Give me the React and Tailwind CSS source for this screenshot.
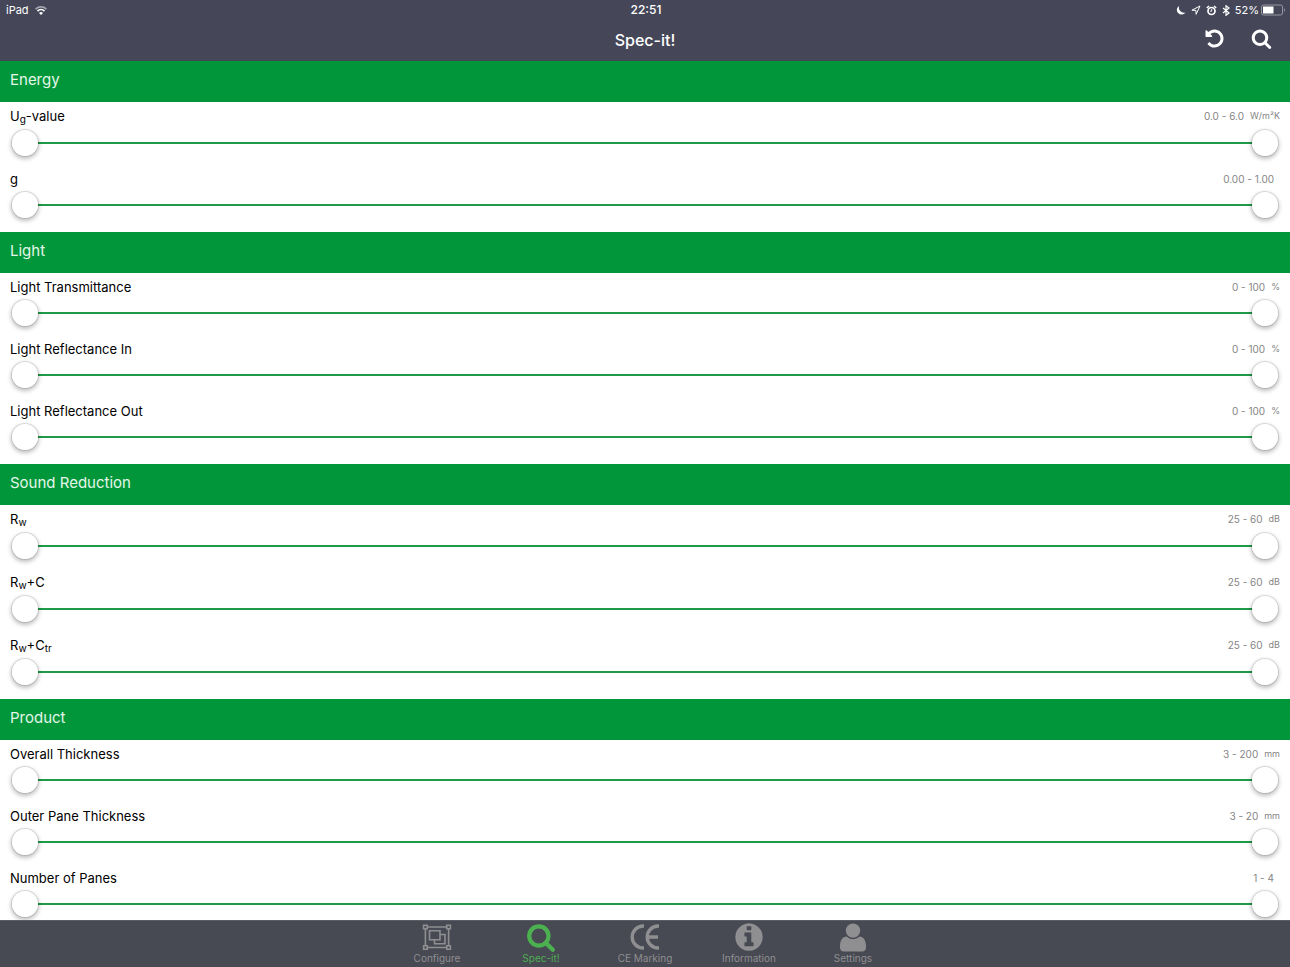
import { useState } from "react";

const PATHS = {
  search:
    "M1216 832q0-185-131.5-316.5t-316.5-131.5-316.5 131.5-131.5 316.5 131.5 316.5 316.5 131.5 316.5-131.5 131.5-316.5zm512 832q0 52-38 90t-90 38q-54 0-90-38l-343-342q-179 124-399 124-143 0-273.5-55.5t-225-150-150-225-55.5-273.5 55.5-273.5 150-225 225-150 273.5-55.5 273.5 55.5 225 150 150 225 55.5 273.5q0 220-124 399l343 343q37 37 37 90z",
  undo: "M1664 896q0 156-61 298t-164 245-245 164-298 61q-172 0-327-72.5t-264-204.5q-7-10-6.5-22.5t8.5-20.5l137-138q10-9 25-9 16 2 23 12 73 95 179 147t225 52q104 0 198.5-40.5t163.5-109.5 109.5-163.5 40.5-198.5-40.5-198.5-109.5-163.5-163.5-109.5-198.5-40.5q-98 0-188 35.5t-160 101.5l137 138q31 30 14 69-17 40-59 40h-448q-26 0-45-19t-19-45v-448q0-42 40-59 39-17 69 14l130 129q107-101 244.5-156.5t284.5-55.5q156 0 298 61t245 164 164 245 61 298z",
  info: "M1152 1376v-160q0-14-9-23t-23-9h-96v-512q0-14-9-23t-23-9h-320q-14 0-23 9t-9 23v160q0 14 9 23t23 9h96v320h-96q-14 0-23 9t-9 23v160q0 14 9 23t23 9h448q14 0 23-9t9-23zm-128-896v-160q0-14-9-23t-23-9h-192q-14 0-23 9t-9 23v160q0 14 9 23t23 9h192q14 0 23-9t9-23zm640 416q0 209-103 385.5t-279.5 279.5-385.5 103-385.5-103-279.5-279.5-103-385.5 103-385.5 279.5-279.5 385.5-103 385.5 103 279.5 279.5 103 385.5z",
};

function Glyph({ name, className }) {
  return (
    <svg viewBox="0 0 1792 1792" fill="currentColor" className={className} aria-hidden="true">
      <path d={PATHS[name]} />
    </svg>
  );
}

function ConfigureIcon() {
  return (
    <svg viewBox="0 0 30 30" className="size-[30px]" fill="none" stroke="currentColor" strokeWidth="1.6" aria-hidden="true">
      <path d="M5.200 5h19.600M5.200 25.500h19.600M3.400 6.800v16.900M26.600 6.800v16.900" />
      <path d="M1.600 3.200h3.600v3.600H1.600zM24.800 3.200h3.600v3.600h-3.600zM1.600 23.700h3.600v3.600H1.600zM24.800 23.700h3.600v3.600h-3.600z" />
      <path d="M7.500 8.700h10.500v9H7.500zM18 12.500h5v9.200H12.500v-4" />
    </svg>
  );
}

function CeIcon() {
  return (
    <svg viewBox="0 0 30 30" className="size-[30px]" fill="none" stroke="currentColor" strokeWidth="3.4" aria-hidden="true">
      <path d="M14 4h-.8a11 11 0 0 0 0 22h.8M29 4h-.8a11 11 0 0 0 0 22h.8M17.500 15H28" />
    </svg>
  );
}

function PersonIcon() {
  return (
    <svg viewBox="0 0 30 30" className="size-[30px]" fill="currentColor" aria-hidden="true">
      <circle cx="15" cy="8.600" r="7.200" />
      <path d="M8.500 14.600C4.600 14.600 2 18.800 2 23.800v2C2 28 3.600 29.600 5.800 29.600h18.400c2.200 0 3.800-1.600 3.800-3.800v-2c0-5-2.600-9.200-6.500-9.200A9.400 9.400 0 0 1 8.500 14.600z" />
    </svg>
  );
}

function Sub({ children }) {
  return <sub className="-bottom-0.5 text-[10px]">{children}</sub>;
}

const SECTIONS = [
  {
    title: "Energy",
    rows: [
      { id: "ug", label: <>U<Sub>g</Sub>-value</>, name: "Ug-value", min: 0, max: 6, digits: 1, unit: "W/m²K", sub: true },
      { id: "g", label: "g", name: "g", min: 0, max: 1, digits: 2, unit: "" },
    ],
  },
  {
    title: "Light",
    rows: [
      { id: "lt", label: "Light Transmittance", name: "Light Transmittance", min: 0, max: 100, digits: 0, unit: "%" },
      { id: "lri", label: "Light Reflectance In", name: "Light Reflectance In", min: 0, max: 100, digits: 0, unit: "%" },
      { id: "lro", label: "Light Reflectance Out", name: "Light Reflectance Out", min: 0, max: 100, digits: 0, unit: "%" },
    ],
  },
  {
    title: "Sound Reduction",
    rows: [
      { id: "rw", label: <>R<Sub>w</Sub></>, name: "Rw", min: 25, max: 60, digits: 0, unit: "dB", sub: true },
      { id: "rwc", label: <>R<Sub>w</Sub>+C</>, name: "Rw+C", min: 25, max: 60, digits: 0, unit: "dB", sub: true },
      { id: "rwctr", label: <>R<Sub>w</Sub>+C<Sub>tr</Sub></>, name: "Rw+Ctr", min: 25, max: 60, digits: 0, unit: "dB", sub: true },
    ],
  },
  {
    title: "Product",
    rows: [
      { id: "thick", label: "Overall Thickness", name: "Overall Thickness", min: 3, max: 200, digits: 0, unit: "mm" },
      { id: "outer", label: "Outer Pane Thickness", name: "Outer Pane Thickness", min: 3, max: 20, digits: 0, unit: "mm" },
      { id: "panes", label: "Number of Panes", name: "Number of Panes", min: 1, max: 4, digits: 0, unit: "" },
    ],
  },
];

const RANGE =
  "pointer-events-none absolute inset-0 m-0 h-7 w-full appearance-none bg-transparent outline-none [&::-webkit-slider-thumb]:pointer-events-auto [&::-webkit-slider-thumb]:size-7 [&::-webkit-slider-thumb]:appearance-none [&::-webkit-slider-thumb]:rounded-full [&::-webkit-slider-thumb]:border [&::-webkit-slider-thumb]:border-black/10 [&::-webkit-slider-thumb]:bg-white [&::-webkit-slider-thumb]:bg-clip-padding [&::-webkit-slider-thumb]:shadow-[0_2px_4px_rgba(0,0,0,0.25)]";

function RangeRow({ row }) {
  const [low, setLow] = useState(row.min);
  const [high, setHigh] = useState(row.max);
  const step = row.digits ? 1 / 10 ** row.digits : 1;
  const span = row.max - row.min;
  const start = ((low - row.min) / span) * 100;
  const end = ((row.max - high) / span) * 100;
  return (
    <div className={row.sub ? "h-[63px] pt-1" : "h-[62px] pt-1"}>
      <div className={row.sub ? "flex h-[23px] justify-between px-[10px]" : "flex h-[22px] justify-between px-[10px]"}>
        <label htmlFor={row.id + "-low"} className="text-[13px] leading-5 text-black">
          {row.label}
        </label>
        <output className="flex gap-[6px] text-[10px] leading-5 text-[#858585]">
          <span>
            {low.toFixed(row.digits)} - {high.toFixed(row.digits)}
          </span>
          <span className="text-[9px] leading-5">{row.unit}</span>
        </output>
      </div>
      <div className="relative mx-[11px] h-7">
        <div className="flex h-7 items-center px-3">
          <div className="h-[2px] flex-1 bg-[#1f9a48]" style={{ marginLeft: start + "%", marginRight: end + "%" }} />
        </div>
        <input id={row.id + "-low"} type="range" min={row.min} max={row.max} step={step} value={low} onChange={(e) => setLow(Math.min(Number(e.target.value), high))} className={RANGE} />
        <input type="range" aria-label={row.name + " maximum"} min={row.min} max={row.max} step={step} value={high} onChange={(e) => setHigh(Math.max(Number(e.target.value), low))} className={RANGE} />
      </div>
    </div>
  );
}

function StatusBar() {
  return (
    <div className="grid h-5 grid-cols-3 items-center pl-[6px] pr-1 text-[11px] leading-5">
      <div className="flex items-center gap-[6px]">
        <span>iPad</span>
        <svg viewBox="0 0 12 9" className="h-[9px] w-3" fill="none" stroke="currentColor" strokeWidth="1.7" aria-hidden="true">
          <path d="M.6 3.100a7.700 7.700 0 0 1 10.800 0" opacity=".5" />
          <path d="M2.500 5.100a5 5 0 0 1 7 0" />
          <path d="M6 9 4 6.900a2.900 2.900 0 0 1 4 0z" fill="currentColor" stroke="none" />
        </svg>
      </div>
      <time className="text-center text-xs font-medium leading-5">22:51</time>
      <div className="flex items-center justify-end gap-[5px]">
        <svg viewBox="0 0 10 10" className="size-[10px]" fill="currentColor" aria-hidden="true">
          <path d="M3.300.7A4.700 4.700 0 1 0 9.500 7.400 5 5 0 0 1 3.300.7z" />
        </svg>
        <svg viewBox="0 0 10 10" className="size-[10px]" fill="none" stroke="currentColor" strokeWidth="1" strokeLinejoin="round" aria-hidden="true">
          <path d="M9 1 .9 5.200l4 .2.200 3.900z" />
        </svg>
        <svg viewBox="0 0 11 11" className="size-[11px]" fill="none" stroke="currentColor" aria-hidden="true">
          <circle cx="5.500" cy="6" r="3.500" strokeWidth="1.700" />
          <path d="M.8 3 3 1M10.200 3 8 1" strokeWidth="1.500" />
          <path d="M5.700 4v2.200H4" strokeWidth=".9" />
        </svg>
        <svg viewBox="0 0 8 11" className="h-[11px] w-2" fill="none" stroke="currentColor" strokeWidth="1.2" aria-hidden="true">
          <path d="M1 3l6 5-3 2.300V.7L7 3 1 8" />
        </svg>
        <span>52%</span>
        <svg viewBox="0 0 25 12" className="-ml-[3px] h-3 w-[25px]" aria-hidden="true">
          <rect x=".5" y="1" width="21" height="10" rx="2" fill="none" stroke="#9899a2" />
          <rect x="2" y="2.500" width="10.500" height="7" fill="currentColor" />
          <path d="M23 4.200c1.300.5 1.300 3.100 0 3.600z" fill="#9899a2" />
        </svg>
      </div>
    </div>
  );
}

const TABS = [
  { label: "Configure", icon: <ConfigureIcon /> },
  { label: "Spec-it!", icon: <Glyph name="search" className="size-[30px]" />, active: true },
  { label: "CE Marking", icon: <CeIcon /> },
  { label: "Information", icon: <Glyph name="info" className="size-8" /> },
  { label: "Settings", icon: <PersonIcon /> },
];

export default function App() {
  return (
    <div className="flex h-screen flex-col bg-white font-['Inter','Liberation_Sans',sans-serif]">
      <header className="bg-[#454759] text-white">
        <StatusBar />
        <div className="grid h-[41px] grid-cols-[1fr_auto_1fr] items-center pb-[2px]">
          <h1 className="col-start-2 text-base font-medium">Spec-it!</h1>
          <div className="flex items-center justify-end gap-[26px] pb-[2px] pr-[18px]">
            <button type="button" aria-label="Reset">
              <Glyph name="undo" className="size-[21px]" />
            </button>
            <button type="button" aria-label="Search">
              <Glyph name="search" className="size-[21px]" />
            </button>
          </div>
        </div>
      </header>
      <main className="min-h-0 flex-1 overflow-y-auto [scrollbar-width:none]">
        {SECTIONS.map((section) => (
          <section key={section.title} className="pb-[5px]">
            <h2 className="h-[41px] bg-[#02963a] px-[10px] pt-px text-[15px] leading-9 text-[#e4f6e9]">{section.title}</h2>
            {section.rows.map((row) => (
              <RangeRow key={row.id} row={row} />
            ))}
          </section>
        ))}
      </main>
      <nav className="flex h-[47px] justify-center border-t border-[#5b5d66] bg-[#474953]">
        {TABS.map((tab) => (
          <button key={tab.label} type="button" aria-current={tab.active ? "page" : undefined} className={tab.active ? "flex w-[104px] flex-col items-center text-[#4caf50]" : "flex w-[104px] flex-col items-center text-[#8f8f91]"}>
            <span className="flex h-[31px] items-center">{tab.icon}</span>
            <span className="text-[10px] leading-3">{tab.label}</span>
          </button>
        ))}
      </nav>
    </div>
  );
}
